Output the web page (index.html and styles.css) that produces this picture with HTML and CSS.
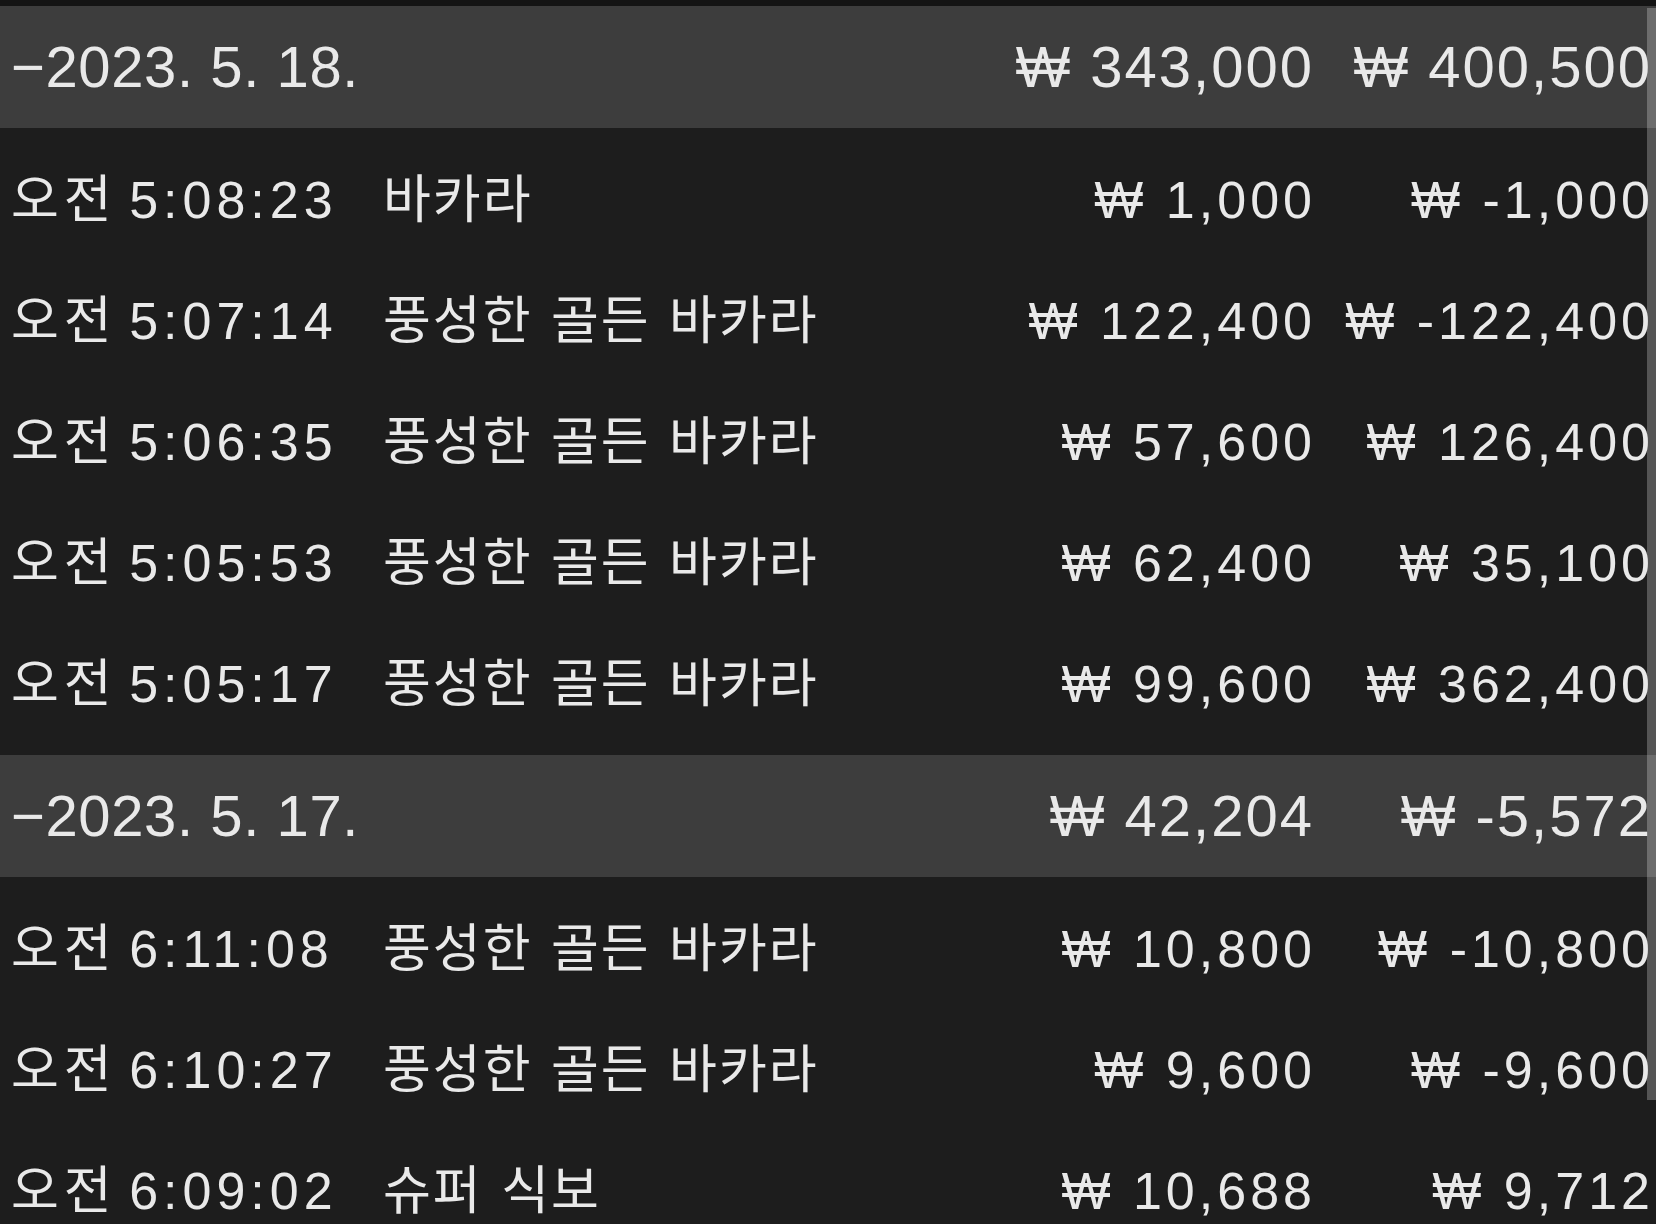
FILE: index.html
```html
<!DOCTYPE html>
<html lang="ko">
<head>
<meta charset="utf-8">
<title>기록</title>
<link rel="stylesheet" href="styles.css">
</head>
<body>
<div class="screen">
  <div class="topbar"></div>
  <section class="group">
    <div class="grid head">
      <div class="date">−2023. 5. 18.</div>
      <div class="amt">₩ 343,000</div>
      <div class="amt">₩ 400,500</div>
    </div>
    <div class="rows">
      <div class="grid row"><div class="time">오전 5:08:23</div><div class="game">바카라</div><div class="amt">₩ 1,000</div><div class="amt">₩ -1,000</div></div>
      <div class="grid row"><div class="time">오전 5:07:14</div><div class="game">풍성한 골든 바카라</div><div class="amt">₩ 122,400</div><div class="amt">₩ -122,400</div></div>
      <div class="grid row"><div class="time">오전 5:06:35</div><div class="game">풍성한 골든 바카라</div><div class="amt">₩ 57,600</div><div class="amt">₩ 126,400</div></div>
      <div class="grid row"><div class="time">오전 5:05:53</div><div class="game">풍성한 골든 바카라</div><div class="amt">₩ 62,400</div><div class="amt">₩ 35,100</div></div>
      <div class="grid row"><div class="time">오전 5:05:17</div><div class="game">풍성한 골든 바카라</div><div class="amt">₩ 99,600</div><div class="amt">₩ 362,400</div></div>
    </div>
  </section>
  <section class="group">
    <div class="grid head">
      <div class="date">−2023. 5. 17.</div>
      <div class="amt">₩ 42,204</div>
      <div class="amt">₩ -5,572</div>
    </div>
    <div class="rows">
      <div class="grid row"><div class="time">오전 6:11:08</div><div class="game">풍성한 골든 바카라</div><div class="amt">₩ 10,800</div><div class="amt">₩ -10,800</div></div>
      <div class="grid row"><div class="time">오전 6:10:27</div><div class="game">풍성한 골든 바카라</div><div class="amt">₩ 9,600</div><div class="amt">₩ -9,600</div></div>
      <div class="grid row"><div class="time">오전 6:09:02</div><div class="game">슈퍼 식보</div><div class="amt">₩ 10,688</div><div class="amt">₩ 9,712</div></div>
    </div>
  </section>
  <div class="scrollbar"></div>
</div>
</body>
</html>
```

FILE: styles.css
```css
* { box-sizing: border-box; }
html, body { margin: 0; padding: 0; background: #1d1d1d; }
body {
  width: 1656px;
  height: 1224px;
  overflow: hidden;
  font-family: "Liberation Sans", "Noto Sans CJK KR", sans-serif;
  color: #e9e9e9;
}
.screen {
  position: relative;
  width: 1656px;
  height: 1224px;
  overflow: hidden;
  background: #1d1d1d;
}
.topbar {
  height: 6px;
  background: #141414;
}
.grid {
  display: grid;
  grid-template-columns: 372px 1fr auto 338px;
  align-items: center;
  padding: 0 6px 0 11px;
  white-space: nowrap;
}
.head {
  height: 122px;
  background: #3d3d3d;
  font-size: 58px;
  line-height: 1;
}
.head .date {
  grid-column: 1 / 3;
  letter-spacing: 0.6px;
}
.head .amt {
  letter-spacing: 2px;
  margin-right: -2px;
}
.rows {
  padding: 11px 0;
  background: #1d1d1d;
}
.row {
  height: 121px;
  font-size: 52px;
  line-height: 1;
}
.row .time { letter-spacing: 5px; word-spacing: -7px; }
.row .game { letter-spacing: 2px; word-spacing: 2px; }
.row .amt {
  letter-spacing: 4px;
  margin-right: -4px;
}
.amt { text-align: right; }
.scrollbar {
  position: absolute;
  right: 0;
  top: 8px;
  width: 9px;
  height: 1092px;
  background: rgba(255, 255, 255, 0.25);
}
```
